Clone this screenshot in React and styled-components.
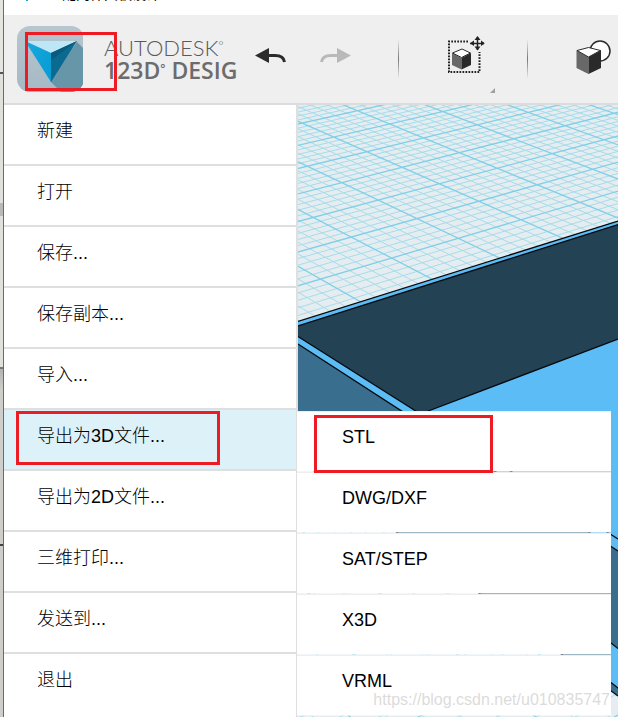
import React from "react"
import styled, { createGlobalStyle, css } from "styled-components"

const GlobalStyle = createGlobalStyle`
  *,
  *::after {
    box-sizing: border-box;
  }

  body {
    margin: 0;
    background: #fff;
    font-family: "Liberation Sans", "Noto Sans CJK SC", sans-serif;
    color: #000;
  }

  button {
    padding: 0;
    border: 0;
    background: none;
    color: inherit;
    font: inherit;
    cursor: pointer;
  }
`

const Page = styled.div`
  position: relative;
  display: flex;
  min-height: 100vh;
  overflow: hidden;
`

const Desktop = styled.div`
  flex: 0 0 4px;
  border-right: 1px solid #6b6b69;
  background: linear-gradient(
    #e4e4e1 0 72px,
    #555 72px 74px,
    #e0e0dd 74px 203px,
    #b9b9b7 203px 216px,
    #e0e0dd 216px 367px,
    #777 367px 369px,
    #b4b4b2 369px,
    #cfcecb 390px 544px,
    #444 544px 546px,
    #cfcecb 546px
  );
`

const Window = styled.div`
  flex: 1;
  min-width: 0;
  display: flex;
  flex-direction: column;
`

const TitleBar = styled.header`
  display: flex;
  gap: 34px;
  height: 15px;
  padding-left: 22px;
`

const TitleIcon = styled.span`
  width: 2px;
  height: 1px;
  background: #1aa7d6;
`

const TitleText = styled.span`
  display: flex;
  align-items: flex-end;
  height: 2px;
  overflow: hidden;
  font-size: 14px;
  line-height: 16px;
`

const Toolbar = styled.div`
  display: flex;
  align-items: center;
  height: 90px;
  padding-left: 13px;
  border-bottom: 2px solid #dcdcdc;
  background: #efefef;
`

const highlight = css`
  content: "";
  position: absolute;
  border: 3px solid #ed1c24;
  pointer-events: none;
`

const AppButton = styled.button`
  position: relative;
  flex: none;
  width: 66px;
  height: 66px;
  margin-right: 21px;

  &::after {
    ${highlight}
    top: 6px;
    left: 8px;
    width: 92px;
    height: 59px;
  }

  svg {
    display: block;
  }
`

const Brand = styled.div`
  flex: 0 0 134px;
  margin-right: 17px;
  line-height: 23px;
  white-space: nowrap;

  sup {
    font-size: 12px;
    line-height: 1;
    vertical-align: 6px;
  }
`

const BrandTop = styled.div`
  font-family: Lato, sans-serif;
  font-size: 22px;
  font-weight: 300;
  color: #5a5a5a;
`

const BrandBottom = styled.div`
  font-family: "Open Sans", "Noto Sans", sans-serif;
  font-size: 23px;
  font-weight: 600;
  color: #6c6c6c;
`

const ToolButton = styled.button`
  flex: none;
  margin-right: ${props => props.$gap || 0}px;

  svg {
    display: block;
  }
`

const Separator = styled.span`
  flex: none;
  width: 1px;
  height: 40px;
  margin-right: 48px;
  background: linear-gradient(#efefef, #777 50%, #efefef);
`

const Workspace = styled.main`
  flex: 1;
  display: flex;
`

const Menu = styled.ul`
  flex: 0 0 294px;
  margin: 0;
  padding: 0;
  border-right: 2px solid #dfdfdf;
  background: #fff;
  list-style: none;
`

const MenuItem = styled.li`
  position: relative;
  border-bottom: 2px solid #dfdfdf;

  &:last-child {
    border-bottom: 0;
  }

  ${props =>
    props.$marked &&
    css`
      &::after {
        ${highlight}
        top: 1px;
        left: 12px;
        width: 204px;
        height: 54px;
      }
    `}
`

const MenuButton = styled.button`
  display: block;
  width: 100%;
  height: 59px;
  padding: 0 0 8px 33px;
  background: ${props => (props.$active ? "#ddf1f8" : "#fff")};
  font-size: 18px;
  font-weight: 300;
  line-height: 26px;
  text-align: left;
`

const SubMenu = styled.ul`
  position: absolute;
  top: 1px;
  left: calc(100% + 1px);
  z-index: 1;
  width: 314px;
  margin: 0;
  padding: 0;
  list-style: none;
`

const SubItem = styled.li`
  position: relative;
  border-bottom: 1px solid rgba(255, 255, 255, 0.5);

  ${props =>
    props.$marked &&
    css`
      &::after {
        ${highlight}
        top: 4px;
        left: 17px;
        width: 179px;
        height: 58px;
        z-index: 1;
      }
    `}
`

const SubButton = styled.button`
  display: block;
  width: 100%;
  height: 60px;
  padding: 0 0 10px 45px;
  border-top: 1px solid #eee;
  background: #fff;
  font-size: 18px;
  line-height: 26px;
  text-align: left;
`

const Viewport = styled.div`
  position: relative;
  flex: 1;
  min-width: 0;
  background: #e6edf0;

  svg {
    position: absolute;
    width: 100%;
    height: 100%;
  }
`

const Watermark = styled.span`
  position: absolute;
  right: 8px;
  bottom: 8px;
  z-index: 2;
  font-size: 16px;
  line-height: 18px;
  color: rgba(210, 210, 210, 0.8);
  text-shadow: 1px 1px 0 rgba(255, 255, 255, 0.7);
  pointer-events: none;
`

const Logo = () => (
  <svg width="66" height="66" viewBox="0 0 66 66" aria-hidden="true">
    <defs>
      <linearGradient id="tile" x1="0" y1="0" x2="0" y2="1">
        <stop offset="0" stopColor="#b7c6cf" />
        <stop offset="1" stopColor="#a5b9c4" />
      </linearGradient>
      <linearGradient id="front" x1="0" y1="0" x2="1" y2="1">
        <stop offset="0" stopColor="#17a9df" />
        <stop offset="1" stopColor="#079bd3" />
      </linearGradient>
      <clipPath id="tileClip">
        <rect width="67" height="66" rx="13" />
      </clipPath>
    </defs>
    <g clipPath="url(#tileClip)">
      <rect width="67" height="66" fill="url(#tile)" />
      <path d="M60 16 67 23V66H44L33 55Z" fill="#6796a8" />
      <path d="M8 15H60L34 27Z" fill="#bde6f6" />
      <path d="M8 15 34 27V56Z" fill="url(#front)" />
      <path d="M60 15 34 27V56Z" fill="#0b6a90" />
      <path d="M60 15 34 27V34Z" fill="#075b7d" />
    </g>
  </svg>
)

const Arrow = ({ color, flip }) => (
  <svg width="32" height="24" viewBox="0 0 32 24" aria-hidden="true">
    <g transform={flip ? "translate(32 0) scale(-1 1)" : undefined}>
      <path d="M0 8.500 14 1V16Z" fill={color} />
      <path d="M13 8.500H20C26 8.500 29 11 29.500 15" fill="none" stroke={color} strokeWidth="3" />
    </g>
  </svg>
)

const SelectIcon = () => (
  <svg width="48" height="68" viewBox="-1 -11 48 68" aria-hidden="true">
    <path
      d="M20 5.500H1V36H31.500V16"
      fill="none"
      stroke="#222"
      strokeWidth="2"
      strokeDasharray="1.700 1.300"
    />
    <path d="M4 17V29L13.500 33.500V22Z" fill="#686868" />
    <path d="M23 17V29L13.500 33.500V22Z" fill="#2a2a2a" />
    <path d="M4.500 17 14 13 22.500 17 13.500 21.500Z" fill="#fff" stroke="#2a2a2a" />
    <path d="M22 7.500H36M29.500 1V14" stroke="#222" strokeWidth="1.500" />
    <path
      d="M29.500 0 32.500 4H26.500ZM29.500 14.500 32.500 10.500H26.500ZM22 7.300 26 4.500V10ZM36.800 7.300 33 4.500V10Z"
      fill="#222"
    />
    <path d="M42 57H47V52Z" fill="#a0a0a0" />
  </svg>
)

const CombineIcon = () => (
  <svg width="36" height="38" viewBox="0 0 36 38" aria-hidden="true">
    <circle cx="24" cy="11" r="10" fill="#fff" stroke="#2b2b2b" strokeWidth="1.500" />
    <path d="M.500 10V28L12.500 34V17Z" fill="#686868" />
    <path d="M25 10V28L12.500 34V17Z" fill="#2a2a2a" />
    <path d="M1 10.500 12.500 7.500 24.500 10.500 12.500 17Z" fill="#fff" stroke="#2b2b2b" />
  </svg>
)

// ground plane -> screen, one unit is one major grid cell
const project = (i, j) => {
  const w = 1 + 0.031 * i + 0.0325 * j
  const x = (505 + 209.5 * i - 111.6 * j) / w / 3 - 8
  const y = (415 - 44.5 * i - 47.6 * j) / w / 3 - 5
  return `${x.toFixed(2)} ${y.toFixed(2)}`
}

const DIVISIONS = 5
const FROM = -9
const TO = 14

const gridPath = major => {
  let d = ""
  for (let n = FROM * DIVISIONS; n <= TO * DIVISIONS; n++) {
    if ((n % DIVISIONS === 0) !== major) continue
    const k = n / DIVISIONS
    d += `M${project(k, FROM)}L${project(k, TO)}`
    d += `M${project(FROM, k)}L${project(TO, k)}`
  }
  return d
}

const Scene = () => (
  <svg viewBox="0 0 320 612" preserveAspectRatio="xMinYMin slice" aria-hidden="true">
    <path d={gridPath(false)} stroke="#a6dcea" fill="none" />
    <path d={gridPath(true)} stroke="#80cfe8" strokeWidth="1.300" fill="none" />
    <path d="M0 216.500 320 116V591L0 354Z" fill="#5cbcf6" />
    <path d="M0 221 320 119.500V234L122.400 309 0 231.500Z" fill="#234254" />
    <path d="M0 239 320 446V543L313 538 262 530V549L0 354Z" fill="#3a6e8f" />
    <path d="M262 480 313 480V585L262 549Z" fill="#3a6e8f" />
    <path d="M313 577.500 320 583V591L313 585.500Z" fill="#3a6e8f" />
    <path
      d="M0 216.500 320 116M0 221 320 119.500M320 234 122.400 309M0 231.500 122.400 309 320 434M0 239 320 446M313 538 320 543.500M313 577.500 320 583M0 354 320 591"
      fill="none"
      stroke="#05090c"
      strokeWidth="1.300"
    />
  </svg>
)

const formats = ["STL", "DWG/DXF", "SAT/STEP", "X3D", "VRML"]

const items = [
  { label: "新建" },
  { label: "打开" },
  { label: "保存..." },
  { label: "保存副本..." },
  { label: "导入..." },
  { label: "导出为3D文件...", children: formats },
  { label: "导出为2D文件..." },
  { label: "三维打印..." },
  { label: "发送到..." },
  { label: "退出" },
]

const App = () => (
  <Page>
    <GlobalStyle />
    <Desktop />
    <Window>
      <TitleBar>
        <TitleIcon />
        <TitleText>配网件夹板设计</TitleText>
      </TitleBar>
      <Toolbar>
        <AppButton aria-label="Autodesk 123D Design">
          <Logo />
        </AppButton>
        <Brand>
          <BrandTop>
            AUTODESK<sup>°</sup>
          </BrandTop>
          <BrandBottom>
            123D<sup>°</sup> DESIG
          </BrandBottom>
        </Brand>
        <ToolButton aria-label="Undo" $gap={32}>
          <Arrow color="#2b2b2b" />
        </ToolButton>
        <ToolButton aria-label="Redo" $gap={47} disabled>
          <Arrow color="#b9b9b9" flip />
        </ToolButton>
        <Separator />
        <ToolButton aria-label="Transform" $gap={32}>
          <SelectIcon />
        </ToolButton>
        <Separator />
        <ToolButton aria-label="Combine">
          <CombineIcon />
        </ToolButton>
      </Toolbar>
      <Workspace>
        <Menu>
          {items.map(({ label, children }) => (
            <MenuItem key={label} $marked={!!children}>
              <MenuButton $active={!!children}>{label}</MenuButton>
              {children && (
                <SubMenu>
                  {children.map((name, i) => (
                    <SubItem key={name} $marked={i === 0}>
                      <SubButton>{name}</SubButton>
                    </SubItem>
                  ))}
                </SubMenu>
              )}
            </MenuItem>
          ))}
        </Menu>
        <Viewport>
          <Scene />
        </Viewport>
      </Workspace>
    </Window>
    <Watermark>https://blog.csdn.net/u010835747</Watermark>
  </Page>
)

export default App
